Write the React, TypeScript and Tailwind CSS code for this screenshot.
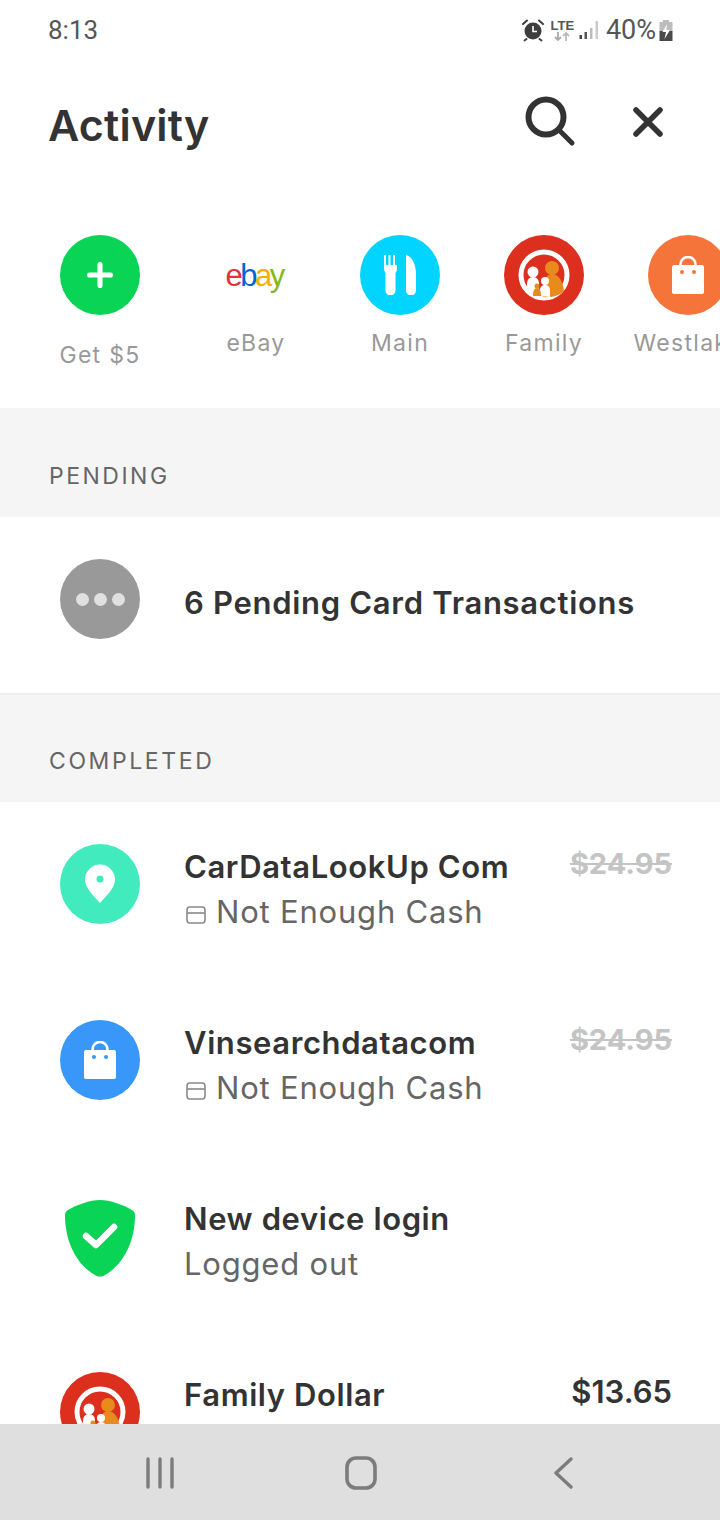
import { Plus } from 'lucide-react';

const font = { fontFamily: 'Inter, sans-serif' };

function BagIcon({ color }: { color: string }) {
  return (
    <svg width="34" height="38" viewBox="0 0 34 38">
      <path d="M9.500 12V8.500a7.500 7.500 0 0 1 15 0V12" fill="none" stroke="#fff" strokeWidth="2.600" />
      <rect x="1" y="9" width="32" height="29" rx="2" fill="#fff" />
      <circle cx="11" cy="16" r="2" fill={color} />
      <circle cx="23" cy="16" r="2" fill={color} />
    </svg>
  );
}

function FamilyIcon() {
  return (
    <svg width="80" height="80" viewBox="0 0 80 80">
      <circle cx="40" cy="40" r="40" fill="#dc2f1e" />
      <circle cx="40" cy="40" r="23" fill="#dc2f1e" stroke="#fff" strokeWidth="5" />
      <circle cx="48" cy="33" r="7" fill="#e88b1c" />
      <path d="M39 62c0-14 2-23 9-23s11 8 12 17c-4 4-12 7-21 6z" fill="#e88b1c" />
      <circle cx="29" cy="37" r="5.500" fill="#fff" />
      <path d="M23 57V49c0-4 2-7 6-7s6 3 6 7v11c-4 0-9-1-12-3z" fill="#fff" />
      <circle cx="41" cy="46" r="4" fill="#fff" />
      <path d="M36 61v-6c0-3 2-5 5-5s5 2 5 5v7z" fill="#fff" />
      <circle cx="33" cy="51" r="2.500" fill="#e88b1c" />
      <path d="M29 61c0-5 1-8 4-8s4 3 4 8z" fill="#e88b1c" />
    </svg>
  );
}

function MainIcon() {
  return (
    <svg width="32" height="40" viewBox="0 0 32 40">
      <path d="M0 0h2v10h2.500V0h2v10H9V0h2v10H11h2V0v12c0 3-.5 5-1.500 6v17.500a5 5 0 0 1-10 0V18C.5 17 0 15 0 12z" fill="#fff" />
      <path d="M22 0c6 1 10 10 10 19v16.500a5 5 0 0 1-10 0z" fill="#fff" />
    </svg>
  );
}

function CardGlyph() {
  return (
    <svg width="20" height="18" viewBox="0 0 20 18" className="ml-[2px] mr-[10px] mt-[5px] shrink-0">
      <rect x="1" y="1" width="18" height="16" rx="3" fill="none" stroke="#8a8a8a" strokeWidth="1.600" />
      <path d="M1 7h18" stroke="#8a8a8a" strokeWidth="1.600" />
    </svg>
  );
}

function StatusIcons() {
  return (
    <div className="flex items-center">
      <svg width="24" height="24" viewBox="0 0 24 24">
        <circle cx="12" cy="13" r="8.500" fill="#3d3d3d" />
        <path d="M12 8v5.500h4" fill="none" stroke="#fff" strokeWidth="1.600" />
        <path d="M2 6l4-3.500M22 6l-4-3.500M5.500 21l-2 1.500M18.500 21l2 1.500" stroke="#3d3d3d" strokeWidth="2" strokeLinecap="round" />
      </svg>
      <div className="ml-[6px] flex w-[23px] flex-col items-center">
        <span className="text-[13px] font-bold leading-[13px] text-[#555]" style={{ fontFamily: 'Liberation Sans, sans-serif' }}>LTE</span>
        <svg width="16" height="9" viewBox="0 0 16 9">
          <path d="M4 0v8M1 5l3 3 3-3" fill="none" stroke="#aaa" strokeWidth="1.800" />
          <path d="M12 9V1M9 4l3-3 3 3" fill="none" stroke="#bbb" strokeWidth="1.800" />
        </svg>
      </div>
      <svg width="20" height="20" viewBox="0 0 20 20" className="ml-[5px]">
        <rect x="0.500" y="15" width="2.500" height="4" fill="#444" />
        <rect x="5.500" y="12" width="2.500" height="7" fill="#555" />
        <rect x="11" y="8" width="2.500" height="11" fill="#bbb" />
        <rect x="16.500" y="1" width="2.500" height="18" fill="#ccc" />
      </svg>
      <span className="ml-[7px] text-[27px] leading-none text-[#555]" style={{ fontFamily: 'Roboto, sans-serif' }}>40%</span>
      <svg width="14" height="21" viewBox="0 0 14 21" className="ml-[3px]">
        <rect x="4" y="0" width="6" height="3" fill="#bdbdbd" />
        <rect x="0.500" y="2" width="13" height="9" fill="#bdbdbd" />
        <rect x="0.500" y="11" width="13" height="10" fill="#4a4a4a" />
        <path d="M8 4L3.500 12H7l-1.500 7L11 10H7.500z" fill="#fff" />
      </svg>
    </div>
  );
}

function Shortcut({ label, labelClass, children }: { label: string; labelClass?: string; children: React.ReactNode }) {
  return (
    <div className="flex w-[144px] shrink-0 flex-col items-center">
      <div className="flex h-[80px] w-[80px] items-center justify-center">{children}</div>
      <span className={`${labelClass ?? 'mt-[13px]'} whitespace-nowrap text-[23px] leading-[30px] tracking-[1.3px] text-[#999]`}>{label}</span>
    </div>
  );
}

function ActivityRow({ icon, title, sub, amount, struck, card }: {
  icon: React.ReactNode;
  title: string;
  sub?: string;
  amount?: string;
  struck?: boolean;
  card?: boolean;
}) {
  return (
    <div className="flex h-[176px] shrink-0 pl-[60px] pr-[48px] pt-[42px]">
      <div className="flex h-[80px] w-[80px] shrink-0 items-center justify-center">{icon}</div>
      <div className="ml-[44px] flex-1 pt-[3px]">
        <div className="text-[31px] font-semibold leading-[40px] tracking-[0.6px] text-[#333]">{title}</div>
        {sub && (
          <div className="mt-[5px] flex items-center text-[31px] leading-[40px] tracking-[0.8px] text-[#666]">
            {card && <CardGlyph />}
            {sub}
          </div>
        )}
      </div>
      {amount && (
        <div className={struck
          ? 'text-[29px] font-bold leading-[40px] text-[#c4c4c4] line-through'
          : 'text-[31px] font-semibold leading-[40px] text-[#333]'}>
          {amount}
        </div>
      )}
    </div>
  );
}

export default function App() {
  return (
    <div className="flex h-[1520px] w-[720px] flex-col overflow-hidden bg-white" style={font}>
      <div className="min-h-0 flex-1 overflow-hidden">
        <div className="flex h-[60px] items-center justify-between pl-[48px] pr-[47px]">
          <span className="text-[26px] text-[#555]" style={{ fontFamily: 'Roboto, sans-serif' }}>8:13</span>
          <StatusIcons />
        </div>

        <div className="flex h-[130px] items-center pl-[48px] pr-[55px]">
          <h1 className="flex-1 text-[43px] font-semibold leading-none tracking-[0.2px] text-[#333]">Activity</h1>
          <svg width="52" height="52" viewBox="0 0 52 52" className="-translate-y-[4px]">
            <circle cx="22" cy="22" r="17.500" fill="none" stroke="#333" strokeWidth="6" />
            <path d="M35 35l13 13" stroke="#333" strokeWidth="5" strokeLinecap="round" />
          </svg>
          <svg width="34" height="34" viewBox="0 0 34 34" className="ml-[55px] -translate-y-[3px]">
            <path d="M5 5l24 24M29 5L5 29" stroke="#333" strokeWidth="5.500" strokeLinecap="round" />
          </svg>
        </div>

        <div className="flex h-[218px] overflow-hidden pl-[28px] pt-[45px]">
          <div className="mr-[12px]">
            <Shortcut label="Get $5" labelClass="mt-[25px]">
              <div className="flex h-[80px] w-[80px] items-center justify-center rounded-full bg-[#0ad455]">
                <Plus size={36} strokeWidth={3.4} color="#fff" />
              </div>
            </Shortcut>
          </div>
          <Shortcut label="eBay">
            <span className="-translate-x-[2px] text-[31px] leading-none tracking-[-2.5px]" style={{ fontFamily: 'Liberation Sans, sans-serif' }}>
              <span className="text-[#e53238]">e</span>
              <span className="text-[#0064d2]">b</span>
              <span className="text-[#f5af02]">a</span>
              <span className="text-[#86b817]">y</span>
            </span>
          </Shortcut>
          <Shortcut label="Main">
            <div className="flex h-[80px] w-[80px] items-center justify-center rounded-full bg-[#00d4ff]">
              <MainIcon />
            </div>
          </Shortcut>
          <Shortcut label="Family">
            <FamilyIcon />
          </Shortcut>
          <Shortcut label="Westlake">
            <div className="flex h-[80px] w-[80px] items-center justify-center rounded-full bg-[#f5743a]">
              <BagIcon color="#f5743a" />
            </div>
          </Shortcut>
        </div>

        <div className="h-[109px] bg-[#f5f5f5] pl-[49px] pt-[53px] text-[23px] leading-[30px] tracking-[2.5px] text-[#666]">
          PENDING
        </div>
        <div className="flex h-[176px] items-start pl-[60px] pt-[42px]">
          <div className="flex h-[80px] w-[80px] items-center justify-center gap-[5px] rounded-full bg-[#999]">
            <span className="h-[13px] w-[13px] rounded-full bg-[#e0e0e0]" />
            <span className="h-[13px] w-[13px] rounded-full bg-[#e0e0e0]" />
            <span className="h-[13px] w-[13px] rounded-full bg-[#e0e0e0]" />
          </div>
          <span className="ml-[44px] mt-[24px] text-[31px] font-semibold leading-[40px] tracking-[0.7px] text-[#333]">6 Pending Card Transactions</span>
        </div>

        <div className="h-[109px] border-t-2 border-[#eeeeee] bg-[#f5f5f5] pl-[49px] pt-[51px] text-[23px] leading-[30px] tracking-[2.6px] text-[#666]">
          COMPLETED
        </div>
        <ActivityRow
          title="CarDataLookUp Com"
          sub="Not Enough Cash"
          amount="$24.95"
          struck
          card
          icon={
            <div className="flex h-[80px] w-[80px] items-center justify-center rounded-full bg-[#42ebbe]">
              <svg width="32" height="40" viewBox="0 0 32 40">
                <path d="M16 39C9 31 1 24 1 15.500a15 15 0 0 1 30 0C31 24 23 31 16 39z" fill="#fff" />
                <circle cx="16" cy="15" r="3.500" fill="#42ebbe" />
              </svg>
            </div>
          }
        />
        <ActivityRow
          title="Vinsearchdatacom"
          sub="Not Enough Cash"
          amount="$24.95"
          struck
          card
          icon={
            <div className="flex h-[80px] w-[80px] items-center justify-center rounded-full bg-[#3897f8]">
              <BagIcon color="#3897f8" />
            </div>
          }
        />
        <ActivityRow
          title="New device login"
          sub="Logged out"
          icon={
            <svg width="72" height="78" viewBox="0 0 72 78" className="translate-y-[2px]">
              <path d="M36 1C26 1 12 6 4 11c-2 1-3 3-3 5 0 26 11 49 30 60 3 2 7 2 10 0 19-11 30-34 30-60 0-2-1-4-3-5C60 6 46 1 36 1z" fill="#0ad455" />
              <path d="M22 37l10 9 18-18" fill="none" stroke="#fff" strokeWidth="6.500" strokeLinecap="round" strokeLinejoin="round" />
            </svg>
          }
        />
        <ActivityRow title="Family Dollar" amount="$13.65" icon={<FamilyIcon />} />
      </div>

      <div className="grid h-[96px] shrink-0 grid-cols-3 items-center bg-[#dfdfdf] pl-[59px] pr-[56px] pt-[2px]">
        <svg width="28" height="32" viewBox="0 0 28 32" className="justify-self-center">
          <path d="M2 2v28M14 2v28M26 2v28" stroke="#7c7c7c" strokeWidth="3.400" strokeLinecap="round" />
        </svg>
        <svg width="32" height="34" viewBox="0 0 32 34" className="justify-self-center">
          <rect x="2" y="2" width="28" height="30" rx="9" fill="none" stroke="#7c7c7c" strokeWidth="3.600" />
        </svg>
        <svg width="20" height="32" viewBox="0 0 20 32" className="justify-self-center">
          <path d="M18 2L3 16l15 14" fill="none" stroke="#7c7c7c" strokeWidth="3.400" strokeLinecap="round" strokeLinejoin="round" />
        </svg>
      </div>
    </div>
  );
}
